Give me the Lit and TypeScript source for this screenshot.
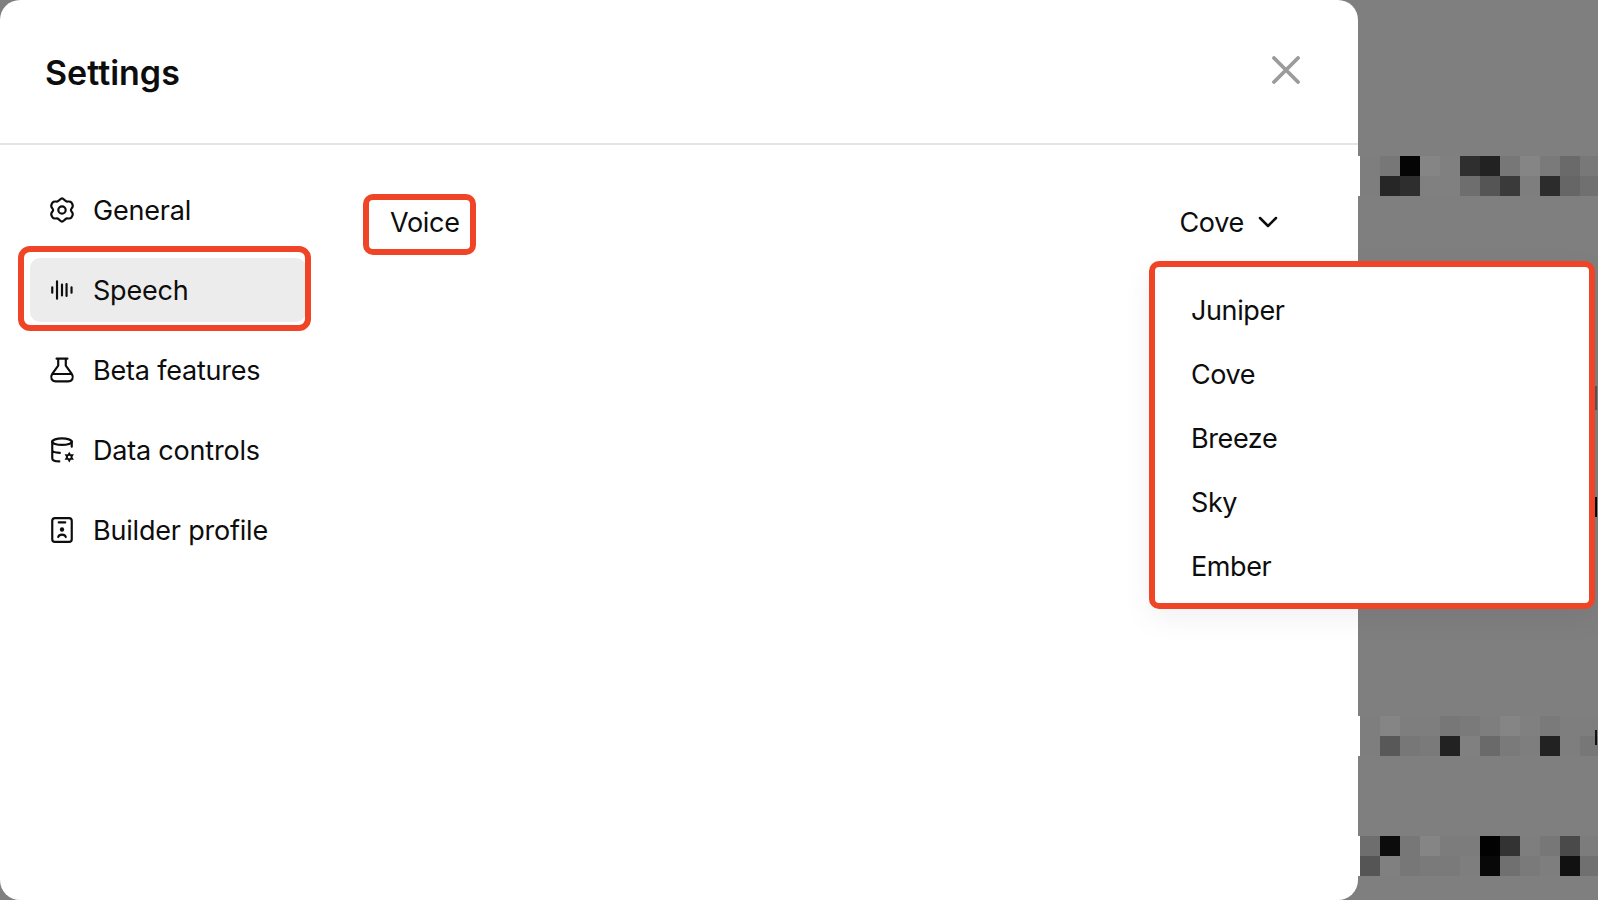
import { LitElement, html, css, svg } from 'lit';
import { customElement, state } from 'lit/decorators.js';

const NAV = [
  {
    label: 'General',
    icon: svg`<path d="M12 1.2C13.6 1.2 14.6 4 16.6 4.2C18 4.3 19.6 3.6 20.6 5C21.6 6.4 22.4 7.6 21.8 9C21.4 10 20.2 11 20.2 12C20.2 13 21.4 14 21.8 15C22.4 16.4 21.6 17.6 20.6 19C19.6 20.4 18 19.7 16.6 19.8C14.6 20 13.6 22.8 12 22.8C10.4 22.8 9.4 20 7.4 19.8C6 19.7 4.4 20.4 3.4 19C2.4 17.6 1.6 16.4 2.2 15C2.6 14 3.8 13 3.8 12C3.8 11 2.6 10 2.2 9C1.6 7.6 2.4 6.4 3.4 5C4.4 3.6 6 4.3 7.4 4.2C9.4 4 10.4 1.2 12 1.2Z"/><circle cx="12" cy="12" r="3.4"/>`,
  },
  {
    label: 'Speech',
    active: true,
    icon: svg`<path d="M3 9.5v5M7.400 4v16M12 7v10M16.200 6.500v11M20.800 9.500v5"/>`,
  },
  {
    label: 'Beta features',
    icon: svg`<path d="M7 1.500h10M8.500 1.500V8L3 15.500C.8 18.800 2.500 22.500 6.500 22.500h11c4 0 5.700-3.700 3.500-7L15.500 8V1.500M3.500 15.700h17"/>`,
  },
  {
    label: 'Data controls',
    icon: svg`<ellipse cx="12" cy="4.300" rx="9" ry="3"/><path d="M3 4.300V19.500c0 1.800 3 3 6.500 3M21 4.300V9M3 12c0 1.500 3 2.500 7 2.700"/><path d="M18.700 13.500l4.300 7.500h-8.600zM18.700 23.500l-4.300-7.500h8.600z" fill="currentColor" stroke="none"/><circle cx="18.700" cy="18.500" r="1.300" fill="#fff" stroke="none"/>`,
  },
  {
    label: 'Builder profile',
    icon: svg`<rect x="3" y="1" width="18" height="22" rx="2.500"/><path d="M9 5h6M8.500 18.500c.5-1.600 2-2.200 3.500-2.200s3 .6 3.500 2.200"/><circle cx="12" cy="11.500" r="2" fill="currentColor" stroke="none"/>`,
  },
];

const VOICES = ['Juniper', 'Cove', 'Breeze', 'Sky', 'Ember'];

// grey levels of the pixelated page behind the dialog, 12 cells per row
const MOSAIC_TOP = [
  [0x7e, 0x77, 0x05, 0x85, 0x80, 0x2f, 0x22, 0x77, 0x85, 0x7a, 0x6a, 0x78],
  [0x7e, 0x26, 0x2e, 0x80, 0x80, 0x6e, 0x55, 0x3a, 0x7e, 0x2c, 0x66, 0x70],
];
const MOSAIC_MID = [
  [0x7e, 0x85, 0x7e, 0x7e, 0x77, 0x7a, 0x7e, 0x85, 0x80, 0x7a, 0x7e, 0x7e],
  [0x7e, 0x58, 0x77, 0x7a, 0x22, 0x80, 0x6a, 0x7a, 0x7e, 0x22, 0x7e, 0x77],
];
const MOSAIC_BOTTOM = [
  [0x6e, 0x0c, 0x77, 0x85, 0x7c, 0x7c, 0x02, 0x33, 0x7e, 0x77, 0x4a, 0x7c],
  [0x55, 0x80, 0x77, 0x7a, 0x7a, 0x7e, 0x08, 0x70, 0x7a, 0x7e, 0x11, 0x70],
];

// small leftovers of page content peeking out at the right edge
const TICKS = [
  { top: 386, height: 24, color: '#555' },
  { top: 497, height: 20, color: '#000' },
  { top: 730, height: 15, color: '#111' },
];

@customElement('app-root')
export class AppRoot extends LitElement {
  static override styles = css`
    :host {
      display: flex;
      width: 1598px;
      height: 900px;
      overflow: hidden;
      position: relative;
      background: #7f7f7f;
      color: #0d0d0d;
      font-family: Inter, 'Liberation Sans', sans-serif;
      font-size: 27px;
      letter-spacing: -0.3px;
    }

    .panel {
      width: 1358px;
      height: 900px;
      flex: none;
      display: flex;
      flex-direction: column;
      background: #fff;
      border-radius: 20px;
    }

    .header {
      height: 145px;
      flex: none;
      display: flex;
      align-items: center;
      justify-content: space-between;
      padding: 2px 58px 0 45px;
      box-sizing: border-box;
      border-bottom: 2px solid #e5e5e5;
    }

    .title {
      font-size: 34px;
      font-weight: 600;
      letter-spacing: 0;
    }

    .close {
      width: 28px;
      height: 28px;
      margin-top: -5px;
      color: #9b9b9b;
      display: block;
    }

    .body {
      flex: 1;
      display: flex;
      padding: 33px 0 0 30px;
      gap: 69px;
    }

    .nav {
      width: 276px;
      flex: none;
      display: flex;
      flex-direction: column;
      gap: 16px;
      letter-spacing: -0.2px;
    }

    .item {
      height: 64px;
      display: flex;
      align-items: center;
      gap: 18px;
      padding-left: 19px;
      border-radius: 10px;
      position: relative;
    }

    .item.active {
      background: #ececec;
    }

    .item.active::after {
      content: '';
      position: absolute;
      inset: -12px -5px -9px -12px;
      border: 6px solid #ef4526;
      border-radius: 12px;
    }

    .item svg {
      width: 26px;
      height: 26px;
      flex: none;
      fill: none;
      stroke: currentColor;
      stroke-width: 2;
      stroke-linecap: round;
      stroke-linejoin: round;
    }

    .setting {
      flex: 1;
      height: 44px;
      margin-top: 22px;
      padding: 0 79px 0 15px;
      display: flex;
      align-items: center;
      justify-content: space-between;
    }

    .voice {
      position: relative;
    }

    .voice::after {
      content: '';
      position: absolute;
      inset: -12px -16px -16px -27px;
      border: 6px solid #ef4526;
      border-radius: 10px;
    }

    .select {
      display: flex;
      align-items: center;
      gap: 13px;
    }

    .select svg {
      width: 22px;
      height: 22px;
      fill: none;
      stroke: currentColor;
      stroke-width: 2.5;
      stroke-linecap: round;
      stroke-linejoin: round;
    }

    .menu {
      position: absolute;
      left: 1149px;
      top: 261px;
      width: 446px;
      height: 348px;
      box-sizing: border-box;
      padding: 11px 0 5px;
      background: #fff;
      border: 6px solid #ef4526;
      border-radius: 10px;
      box-shadow: 0 10px 30px rgba(0, 0, 0, 0.06);
      letter-spacing: -0.4px;
    }

    .menu div {
      height: 64px;
      display: flex;
      align-items: center;
      padding-left: 36px;
    }

    .backdrop {
      flex: 1;
      display: flex;
      flex-direction: column;
      padding-top: 156px;
    }

    .row {
      display: grid;
      grid-template-columns: 2px repeat(11, 20px) 18px;
      grid-auto-rows: 20px;
    }

    .row.mid {
      margin-top: 520px;
    }

    .row.bottom {
      margin-top: 80px;
    }

    .sliver {
      background: #fff;
    }

    .tick {
      position: absolute;
      left: 1595px;
      width: 2px;
    }
  `;

  @state()
  private _voice = 'Cove';

  private _mosaic(rows: number[][], cls: string) {
    return html`<div class="row ${cls}">
      ${rows.map(
        (row) => html`<div class="sliver"></div>
          ${row.map((v) => html`<div style="background: rgb(${v}, ${v}, ${v})"></div>`)}`
      )}
    </div>`;
  }

  override render() {
    return html`
      <div class="panel">
        <div class="header">
          <div class="title">Settings</div>
          <svg class="close" viewBox="0 0 28 28" fill="none" stroke="currentColor" stroke-width="3.8" stroke-linecap="round">
            <path d="M2 2l24 24M26 2L2 26" />
          </svg>
        </div>
        <div class="body">
          <div class="nav">
            ${NAV.map(
              (n) => html`<div class="item ${n.active ? 'active' : ''}">
                <svg viewBox="0 0 24 24">${n.icon}</svg>
                <span>${n.label}</span>
              </div>`
            )}
          </div>
          <div class="setting">
            <span class="voice">Voice</span>
            <div class="select">
              <span>${this._voice}</span>
              <svg viewBox="0 0 22 22"><path d="M3 7l8 8 8-8" /></svg>
            </div>
          </div>
        </div>
      </div>
      <div class="backdrop">
        ${this._mosaic(MOSAIC_TOP, 'top')} ${this._mosaic(MOSAIC_MID, 'mid')} ${this._mosaic(MOSAIC_BOTTOM, 'bottom')}
      </div>
      ${TICKS.map(
        (t) => html`<div class="tick" style="top: ${t.top}px; height: ${t.height}px; background: ${t.color}"></div>`
      )}
      <div class="menu">${VOICES.map((v) => html`<div>${v}</div>`)}</div>
    `;
  }
}

declare global {
  interface HTMLElementTagNameMap {
    'app-root': AppRoot;
  }
}
